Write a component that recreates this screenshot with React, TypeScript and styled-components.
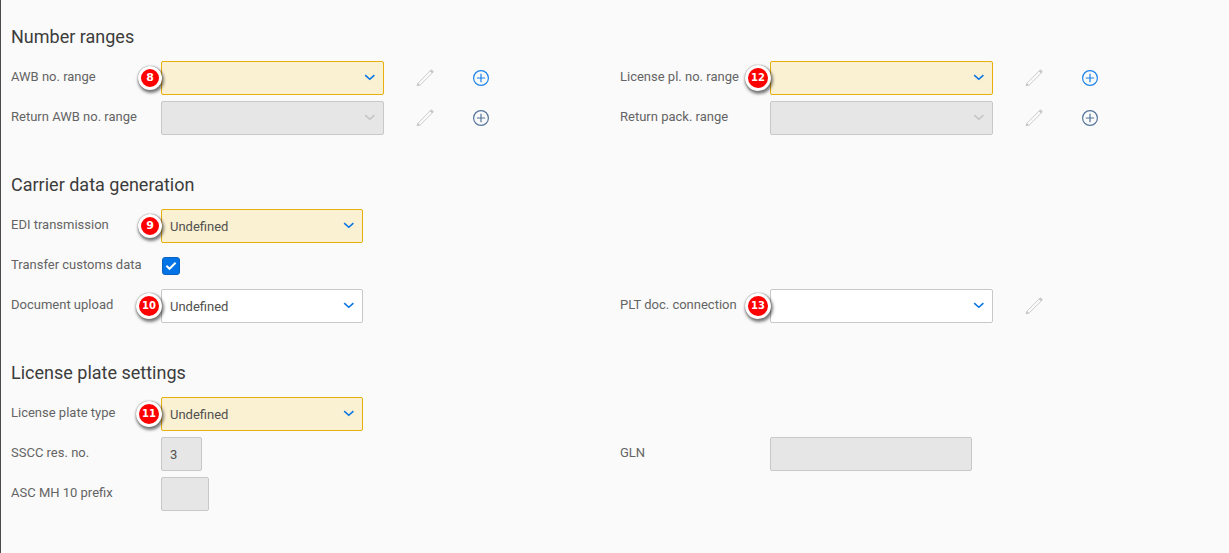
import React, { useId, useState } from "react";
import styled, { createGlobalStyle, css } from "styled-components";

const GlobalStyle = createGlobalStyle`
  *, *::before, *::after { box-sizing: border-box; }
  body {
    margin: 0;
    background: #fafafa;
    color: #646464;
    font-family: Roboto, "Liberation Sans", sans-serif;
    font-size: 13px;
    line-height: 16px;
  }
`;

type Tone = "required" | "disabled" | "plain";

const tones = {
  required: css`background: #faf0d2; border-color: #e8ae0c;`,
  disabled: css`background: #e6e6e6; border-color: #c8c8c8;`,
  plain: css`background: #ffffff; border-color: #c8c8c8;`,
};

const Page = styled.main`
  display: flex;
  flex-direction: column;
  gap: 38px;
  min-height: 100vh;
  padding: 25px 0 40px 10px;
  border-left: 1px solid #4b4b4f;
`;

const Section = styled.section`
  display: flex;
  flex-direction: column;
  gap: 12px;
`;

const Heading = styled.h2`
  margin: 0;
  color: #3c3c3c;
  font-size: 18px;
  font-weight: 400;
  line-height: 24px;
`;

const FieldGrid = styled.div`
  display: grid;
  grid-template-columns: repeat(2, minmax(0, 1fr));
  row-gap: 6px;
`;

const Row = styled.div<{ $second?: boolean }>`
  display: flex;
  align-items: center;
  grid-column: ${(p) => (p.$second ? 2 : 1)};
  min-height: 34px;
`;

const Label = styled.label`
  flex: 0 0 150px;
  padding-bottom: 2px;
  white-space: nowrap;
`;

const Control = styled.div`
  position: relative;
  display: flex;
  align-items: center;
`;

const Select = styled.select<{ $tone: Tone; $wide?: boolean }>`
  appearance: none;
  width: ${(p) => (p.$wide ? 223 : 202)}px;
  height: 34px;
  padding: 1px 32px 0 8px;
  border: 1px solid;
  border-radius: 2px;
  color: #505050;
  font: inherit;
  opacity: 1;
  ${(p) => tones[p.$tone]}
`;

const TextInput = styled.input<{ $width: number }>`
  width: ${(p) => p.$width}px;
  height: 34px;
  padding: 0 8px;
  border: 1px solid;
  border-radius: 2px;
  color: #505050;
  font: inherit;
  ${tones.disabled}
`;

const Chevron = styled.svg<{ $muted: boolean }>`
  position: absolute;
  right: 8px;
  top: 11px;
  pointer-events: none;
  color: ${(p) => (p.$muted ? "#c4c4c4" : "#0a76e4")};
`;

const Badge = styled.span<{ $large: boolean }>`
  position: absolute;
  right: 100%;
  top: 50%;
  display: flex;
  align-items: center;
  justify-content: center;
  width: ${(p) => (p.$large ? 26 : 24)}px;
  height: ${(p) => (p.$large ? 26 : 24)}px;
  margin-right: -1px;
  transform: translateY(-50%);
  border: 3px solid #ffffff;
  border-radius: 50%;
  background: #ff0000;
  box-shadow: 0 0 1px rgba(0, 0, 0, 0.5), 1px 2px 3px 1px rgba(0, 0, 0, 0.5);
  color: #ffffff;
  font: bold ${(p) => (p.$large ? 10 : 11)}px/12px "DejaVu Sans", sans-serif;
`;

const IconButton = styled.button<{ $color: string }>`
  display: flex;
  padding: 0;
  border: 0;
  background: none;
  color: ${(p) => p.$color};
`;

const Actions = styled.div`
  display: flex;
  align-items: center;
  gap: 38px;
  margin-left: 32px;
`;

const CheckWrap = styled.span`
  position: relative;
  display: flex;
  margin-left: 1px;
`;

const Checkbox = styled.input`
  appearance: none;
  width: 18px;
  height: 18px;
  margin: 0;
  border: 1px solid #0a62c0;
  border-radius: 3px;
  background: #ffffff;
  &:checked { background: #0073e6; }
`;

const CheckMark = styled.svg`
  position: absolute;
  inset: 0;
  pointer-events: none;
`;

function PencilIcon() {
  return (
    <svg width="18" height="18" viewBox="0 0 18 18" fill="none" stroke="currentColor" strokeWidth="0.9">
      <path d="M1.2 16.6 2.2 13.9 14.4 1.7 Q15.5 0.7 16.6 1.6 Q17.5 2.7 16.5 3.8 L4.3 15.9Z" />
      <path d="M14.2 1.9 16.3 4 16.9 2.8 15.6 1.2Z" fill="currentColor" />
      <path d="M0.6 17.2 1.7 14 4 16.3Z" fill="currentColor" stroke="none" />
    </svg>
  );
}

function PlusIcon() {
  return (
    <svg width="18" height="18" viewBox="0 0 18 18" fill="none" stroke="currentColor" strokeWidth="1.2">
      <circle cx="9" cy="9" r="7.4" />
      <path d="M9 4.8V13.2M4.8 9H13.2" />
    </svg>
  );
}

interface SelectFieldProps {
  label: string;
  tone: Tone;
  value?: string;
  badge?: number;
  second?: boolean;
  wide?: boolean;
  edit?: boolean;
  add?: string;
}

function SelectField({ label, tone, value = "", badge, second, wide, edit, add }: SelectFieldProps) {
  const id = useId();
  return (
    <Row $second={second}>
      <Label htmlFor={id}>{label}</Label>
      <Control>
        <Select id={id} $tone={tone} $wide={wide} disabled={tone === "disabled"} defaultValue={value}>
          <option value={value}>{value}</option>
        </Select>
        <Chevron $muted={tone === "disabled"} width="12" height="12" viewBox="0 0 12 12" fill="none" stroke="currentColor" strokeWidth="1.6">
          <path d="M1.2 3.2 5.8 7.3 10.4 3.2" />
        </Chevron>
        {badge !== undefined && <Badge $large={badge > 9}>{badge}</Badge>}
      </Control>
      {edit && (
        <Actions>
          <IconButton type="button" $color="#c6c6c6" aria-label={`Edit ${label}`}><PencilIcon /></IconButton>
          {add && <IconButton type="button" $color={add} aria-label={`Add ${label}`}><PlusIcon /></IconButton>}
        </Actions>
      )}
    </Row>
  );
}

function TextField({ label, width, value = "", second }: { label: string; width: number; value?: string; second?: boolean }) {
  const id = useId();
  return (
    <Row $second={second}>
      <Label htmlFor={id}>{label}</Label>
      <TextInput id={id} $width={width} defaultValue={value} disabled />
    </Row>
  );
}

function CheckField({ label }: { label: string }) {
  const id = useId();
  const [checked, setChecked] = useState(true);
  return (
    <Row>
      <Label htmlFor={id}>{label}</Label>
      <CheckWrap>
        <Checkbox id={id} type="checkbox" checked={checked} onChange={(e) => setChecked(e.target.checked)} />
        {checked && (
          <CheckMark width="18" height="18" viewBox="0 0 18 18" fill="none" stroke="#ffffff" strokeWidth="2">
            <path d="M4.4 8.8 7.5 11.8 13.6 5.8" />
          </CheckMark>
        )}
      </CheckWrap>
    </Row>
  );
}

export default function App() {
  return (
    <>
      <GlobalStyle />
      <Page>
        <Section>
          <Heading>Number ranges</Heading>
          <FieldGrid>
            <SelectField label="AWB no. range" tone="required" badge={8} wide edit add="#1a82ea" />
            <SelectField label="License pl. no. range" tone="required" badge={12} second wide edit add="#1a82ea" />
            <SelectField label="Return AWB no. range" tone="disabled" wide edit add="#54749c" />
            <SelectField label="Return pack. range" tone="disabled" second wide edit add="#54749c" />
          </FieldGrid>
        </Section>
        <Section>
          <Heading>Carrier data generation</Heading>
          <FieldGrid>
            <SelectField label="EDI transmission" tone="required" value="Undefined" badge={9} />
            <CheckField label="Transfer customs data" />
            <SelectField label="Document upload" tone="plain" value="Undefined" badge={10} />
            <SelectField label="PLT doc. connection" tone="plain" badge={13} second wide edit />
          </FieldGrid>
        </Section>
        <Section>
          <Heading>License plate settings</Heading>
          <FieldGrid>
            <SelectField label="License plate type" tone="required" value="Undefined" badge={11} />
            <TextField label="SSCC res. no." width={41} value="3" />
            <TextField label="GLN" width={202} second />
            <TextField label="ASC MH 10 prefix" width={48} />
          </FieldGrid>
        </Section>
      </Page>
    </>
  );
}
